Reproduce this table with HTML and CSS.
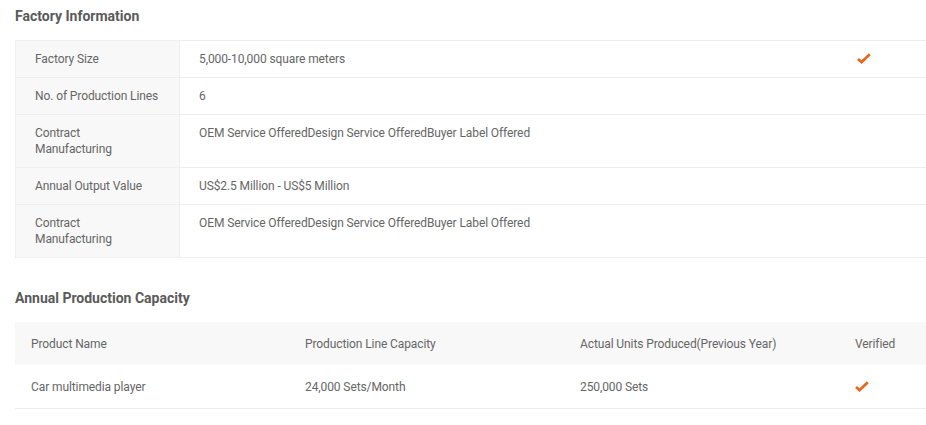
FILE: index.html
```html
<!DOCTYPE html>
<html lang="en">

<head>
    <meta charset="UTF-8">
    <meta name="viewport" content="width=device-width, initial-scale=1.0">
    <title>Factory Information</title>
    <link rel="stylesheet" href="styles.css">
</head>

<body>
    <!-- Factory Information -->
    <section class="block">
        <h3 class="block-title">Factory Information</h3>
        <div class="info-table">
            <div class="info-row">
                <div class="info-label">Factory Size</div>
                <div class="info-value">5,000-10,000 square meters</div>
                <div class="info-check">
                    <svg class="check" width="14" height="12" viewBox="0 0 14 12"><path d="M1 6 L4.6 9.2 L12.8 1.2" /></svg>
                </div>
            </div>
            <div class="info-row">
                <div class="info-label">No. of Production Lines</div>
                <div class="info-value">6</div>
                <div class="info-check"></div>
            </div>
            <div class="info-row">
                <div class="info-label">Contract<br>Manufacturing</div>
                <div class="info-value">OEM Service OfferedDesign Service OfferedBuyer Label Offered</div>
                <div class="info-check"></div>
            </div>
            <div class="info-row">
                <div class="info-label">Annual Output Value</div>
                <div class="info-value">US$2.5 Million - US$5 Million</div>
                <div class="info-check"></div>
            </div>
            <div class="info-row">
                <div class="info-label">Contract<br>Manufacturing</div>
                <div class="info-value">OEM Service OfferedDesign Service OfferedBuyer Label Offered</div>
                <div class="info-check"></div>
            </div>
        </div>
    </section>

    <!-- Annual Production Capacity -->
    <section class="block block-second">
        <h3 class="block-title">Annual Production Capacity</h3>
        <div class="cap-table">
            <div class="cap-row cap-head">
                <div class="cap-cell cap-first">Product Name</div>
                <div class="cap-cell">Production Line Capacity</div>
                <div class="cap-cell">Actual Units Produced(Previous Year)</div>
                <div class="cap-cell">Verified</div>
            </div>
            <div class="cap-row">
                <div class="cap-cell cap-first">Car multimedia player</div>
                <div class="cap-cell">24,000 Sets/Month</div>
                <div class="cap-cell">250,000 Sets</div>
                <div class="cap-cell">
                    <svg class="check" width="14" height="12" viewBox="0 0 14 12"><path d="M1 6 L4.6 9.2 L12.8 1.2" /></svg>
                </div>
            </div>
        </div>
    </section>
</body>

</html>
```

FILE: styles.css
```css
body {
    font-family: Roboto, 'Liberation Sans', sans-serif;
    margin: 0;
    padding: 0 0 0 15px;
    background-color: #fff;
    color: #666;
    font-size: 12px;
    letter-spacing: -0.1px;
    overflow: hidden;
}

.block-title {
    font-size: 14px;
    font-weight: bold;
    color: #5a5a5a;
    letter-spacing: 0;
    line-height: 20px;
    margin: 6px 0 14px;
}

.block-second .block-title {
    margin-top: 30px;
}

/* Tabella informazioni fabbrica */
.info-table {
    border-top: 1px solid #eee;
    border-left: 1px solid #f0f0f0;
}

.info-row {
    display: grid;
    grid-template-columns: 164px 661px 1fr;
    border-bottom: 1px solid #eee;
    line-height: 16px;
}

.info-label {
    background-color: #f8f8f8;
    border-right: 1px solid #eee;
    padding: 10px 8px 10px 19px;
}

.info-value {
    padding: 10px 19px;
}

.info-check {
    padding: 12px 16px 0;
}

.check {
    display: block;
    fill: none;
    stroke: #e8671e;
    stroke-width: 2.8;
}

/* Tabella capacità produttiva */
.cap-row {
    display: grid;
    grid-template-columns: 275px 275px 275px 275px;
    line-height: 16px;
}

.cap-head {
    background-color: #f8f8f8;
}

.cap-row:not(.cap-head) {
    border-bottom: 1px solid #eee;
}

.cap-cell {
    padding: 14px 15px 13px;
}

.cap-first {
    padding-left: 16px;
}

.cap-row:not(.cap-head) .cap-cell:last-child {
    padding-top: 16px;
}
```
